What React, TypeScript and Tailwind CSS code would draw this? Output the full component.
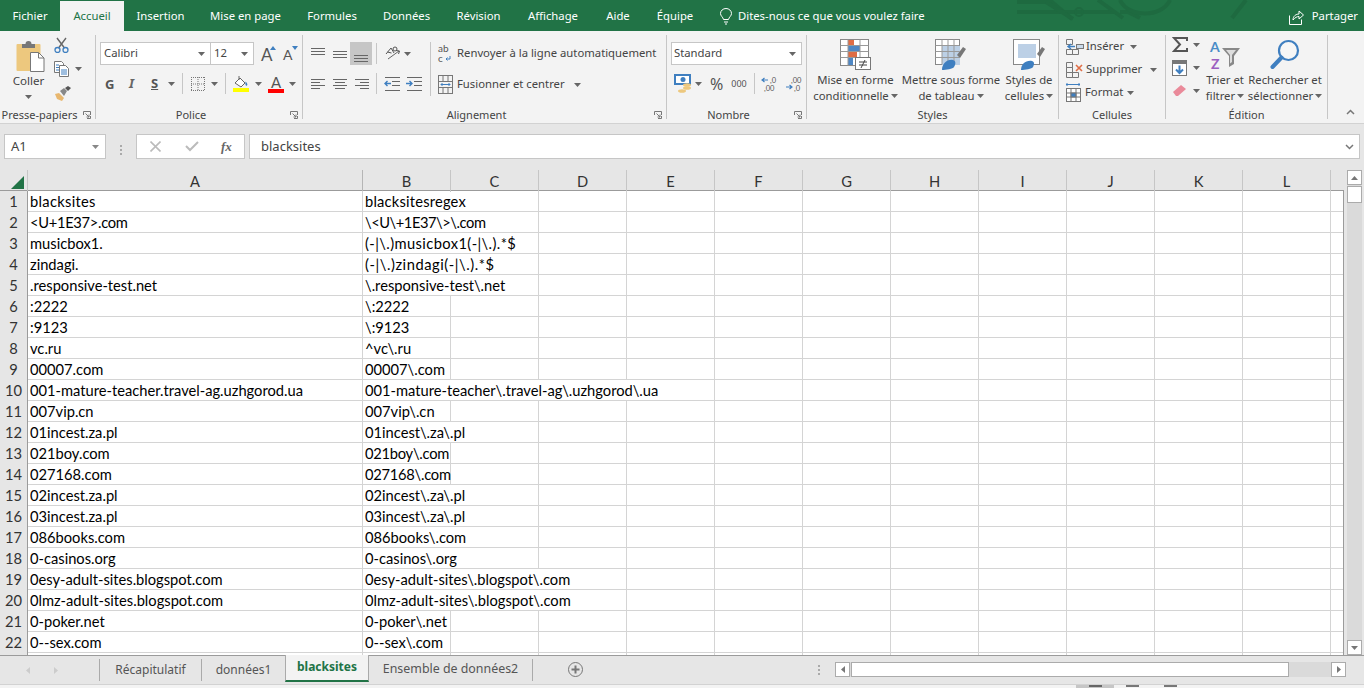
import React from "react";

const UI = "font-['Noto_Sans','Open_Sans',sans-serif]";
const CELL = "font-['Lato','Liberation_Sans',sans-serif]";

const Caret = ({ c = "#666" }: { c?: string }) => (
  <svg width="7" height="4" viewBox="0 0 7 4" className="shrink-0"><path d="M0 0h7L3.5 4z" fill={c} /></svg>
);
const Launcher = () => (
  <svg width="8" height="8" viewBox="0 0 8 8" className="shrink-0" fill="none" stroke="#777">
    <path d="M.5 4V.5H7.500V4M4 7.500h3.500V5" /><path d="M2.500 2.500l3.500 3.500M6 3.500v2.500H3.500" />
  </svg>
);
const Sep = ({ h = "h-[21px]" }: { h?: string }) => <div className={`w-px bg-[#c6c6c6] shrink-0 ${h}`} />;

const Group = ({ w, label, launcher, children }: { w: string; label: string; launcher?: boolean; children: React.ReactNode }) => (
  <div className={`${w} h-[84px] shrink-0 border-r border-[#c6c6c6] flex flex-col`}>
    <div className="h-[73px] shrink-0">{children}</div>
    <div className={`h-[14px] relative flex items-center justify-center text-[11px] leading-[14px] text-[#444] whitespace-nowrap ${launcher ? "pr-[16px]" : ""}`}>
      <span>{label}</span>
      {launcher && <span className="absolute right-[4px] top-[3px]"><Launcher /></span>}
    </div>
  </div>
);

const AlignIcon = ({ lines }: { lines: [number, number, number][] }) => (
  <svg width="16" height="16" viewBox="0 0 16 16" stroke="#666" fill="none">
    {lines.map(([x1, x2, y], i) => <path key={i} d={`M${x1} ${y}.5H${x2}`} />)}
  </svg>
);

const PasteIcon = () => (
  <svg width="29" height="31" viewBox="0 0 29 31">
    <rect x="0.500" y="3" width="24" height="27" rx="1" fill="#edc87e" />
    <path d="M6 7V3h3.500a3 3 0 0 1 6 0H19v4z" fill="#777" />
    <path d="M14.500 11.500h8l5.500 5.500v13.500H14.500z" fill="#fff" stroke="#777" />
    <path d="M22.500 11.500V17H28" fill="none" stroke="#777" />
  </svg>
);
const Scissors = () => (
  <svg width="15" height="16" viewBox="0 0 15 16" fill="none">
    <path d="M3 1l7.500 10M12 1L4.500 11" stroke="#666" strokeWidth="1.400" />
    <circle cx="3.500" cy="13" r="2.500" stroke="#3f7fc0" strokeWidth="1.300" />
    <circle cx="11.500" cy="13" r="2.500" stroke="#3f7fc0" strokeWidth="1.300" />
  </svg>
);
const CopyIcon = () => (
  <svg width="16" height="16" viewBox="0 0 16 16" fill="#fff" stroke="#777">
    <path d="M.5.500h7l2 2v9h-9z" />
    <path d="M5.500 4.500h6l3 3v8h-9z" />
    <path d="M2 4h3M2 6.500h3M2 9h3M7 9h6M7 11h6M7 13h6" stroke="#3f7fc0" />
  </svg>
);
const Painter = () => (
  <svg width="18" height="15" viewBox="0 0 18 15">
    <path d="M1 8l4-1 5 5-2 3-5-2z" fill="#e8b76f" />
    <path d="M6 5l4-3 3 3-3 5z" fill="#888" />
    <path d="M11 2l3-2 3 2-3 3z" fill="#555" />
  </svg>
);
const BigA = ({ size, dir }: { size: number; dir: "up" | "down" }) => (
  <span className="relative flex items-end w-[15px] h-[18px] text-[#555]">
    <span className={`${size === 17 ? "text-[17px]" : "text-[14px]"} leading-[16px] ${CELL}`}>A</span>
    <svg width="6" height="4" viewBox="0 0 6 4" className="absolute right-0 top-[1px]">
      <path d={dir === "up" ? "M0 4h6L3 0z" : "M0 0h6L3 4z"} fill="#3f7fc0" />
    </svg>
  </span>
);
const Borders = () => (
  <svg width="14" height="14" viewBox="0 0 14 14" fill="none" stroke="#777" strokeDasharray="1 1">
    <path d="M.5 0v14M7 0v14M13.500 0v14M0 .5h14M0 7h14M0 13.500h14" />
  </svg>
);
const FillColor = () => (
  <svg width="17" height="17" viewBox="0 0 17 17">
    <path d="M2 8l5-5 5 5-4 4z" fill="#fff" stroke="#666" />
    <path d="M6 1v4" stroke="#666" />
    <path d="M12.500 6.500c1.500 1.500 2.500 3 1.500 4s-2-.5-1.500-4z" fill="#3f7fc0" />
    <rect x="0" y="13" width="16" height="4" fill="#ffff00" />
  </svg>
);
const Orientation = () => (
  <svg width="17" height="17" viewBox="0 0 17 17" fill="none" stroke="#555">
    <path d="M2 9l5-6 3 5M3.500 7l4 1" />
    <circle cx="11" cy="4" r="2" />
    <path d="M4 14L15 6" stroke="#666" /><path d="M12 5.500l3.500.5-1 3" />
  </svg>
);
const Indent = ({ flip }: { flip?: boolean }) => (
  <svg width="16" height="14" viewBox="0 0 16 14" fill="none">
    <path d="M1 .5h15M8 4.500h8M8 8.500h8M1 13.500h15" stroke="#666" />
    <path d={flip ? "M0 6.500h6M3.500 4l2.500 2.500L3.500 9" : "M7 6.500H1M3.500 4L1 6.500 3.500 9"} stroke="#3f7fc0" strokeWidth="1.400" />
  </svg>
);
const WrapIcon = () => (
  <svg width="14" height="20" viewBox="0 0 14 20" overflow="visible">
    <text x="0" y="8" fontSize="10" fill="#555" fontFamily="Lato">ab</text>
    <text x="0" y="18" fontSize="10" fill="#555" fontFamily="Lato">c</text>
    <path d="M12 12v3H8M9.500 13.500L8 15l1.500 1.500" fill="none" stroke="#3f7fc0" />
  </svg>
);
const MergeIcon = () => (
  <svg width="15" height="19" viewBox="0 0 15 19" fill="none" stroke="#777">
    <rect x=".5" y=".5" width="14" height="18" />
    <path d="M.5 6.500h14M.5 12.500h14M5 .5v6M10 .5v6M5 12.500v6M10 12.500v6" />
    <path d="M3 9.500h9M4.500 8L3 9.500 4.500 11M10.500 8L12 9.500 10.500 11" stroke="#3f7fc0" />
  </svg>
);
const Currency = () => (
  <svg width="18" height="20" viewBox="0 0 18 20">
    <rect x="0" y="0" width="17" height="11" fill="#3f7fc0" />
    <rect x="2" y="2" width="13" height="7" fill="#fff" />
    <circle cx="9" cy="5.500" r="2.500" fill="#3f7fc0" />
    <ellipse cx="13" cy="11" rx="4" ry="1.800" fill="#edc87e" />
    <ellipse cx="13" cy="14" rx="4" ry="1.800" fill="#edc87e" />
    <ellipse cx="8" cy="17" rx="4" ry="1.800" fill="#edc87e" />
  </svg>
);
const Decimal = ({ more }: { more?: boolean }) => (
  <svg width="16" height="16" viewBox="0 0 16 16" overflow="visible">
    <text x={more ? 5 : 8} y="7" fontSize="7.500" fill="#555" fontFamily="Lato">{more ? ",00" : ",0"}</text>
    <text x={more ? 8 : 2} y="15" fontSize="7.500" fill="#555" fontFamily="Lato">{more ? ",0" : ",00"}</text>
    <path d={more ? "M0 11h6M3.500 9L6 11l-2.500 2" : "M6 4H0M2.500 2L0 4l2.500 2"} fill="none" stroke="#3f7fc0" strokeWidth="1.200" />
  </svg>
);
const CondFormat = () => (
  <svg width="32" height="32" viewBox="0 0 32 32">
    <rect x=".5" y=".5" width="28" height="26" fill="#fff" stroke="#888" />
    <rect x="8" y="1" width="6" height="5" fill="#df6d45" />
    <rect x="8" y="7" width="12" height="5" fill="#4e87c4" />
    <rect x="8" y="13" width="9" height="5" fill="#df6d45" />
    <rect x="8" y="19" width="5" height="7" fill="#4e87c4" />
    <path d="M8 .5v26M20 .5v26M.5 6.500h28M.5 12.500h28M.5 18.500h28" stroke="#999" fill="none" />
    <rect x="15.500" y="18.500" width="15" height="12" fill="#fff" stroke="#777" />
    <path d="M19 23h8M19 26h8M25 21l-4 8" stroke="#444" fill="none" />
  </svg>
);
const TableStyle = () => (
  <svg width="32" height="32" viewBox="0 0 32 32">
    <rect x=".5" y=".5" width="24" height="25" fill="#fff" stroke="#888" />
    <rect x="7" y="7" width="18" height="19" fill="#bcd0e6" />
    <path d="M7 .5v25M13 .5v25M19 .5v25M.5 6.500h24M.5 12.500h24M.5 18.500h24" stroke="#999" fill="none" />
    <path d="M22 16l6-8 3 2-6 9z" fill="#777" />
    <path d="M7 31c0-6 5-11 11-10 3 1 3 4 1 7-1 2-8 3-12 3z" fill="#3f7fc0" />
  </svg>
);
const CellStyle = () => (
  <svg width="32" height="32" viewBox="0 0 32 32">
    <rect x=".5" y=".5" width="26" height="25" fill="#fff" stroke="#888" />
    <rect x="5" y="5" width="18" height="14" fill="#bcd0e6" />
    <path d="M24 15l5-7 3 2-5 8z" fill="#777" />
    <path d="M8 31c0-6 5-10 11-9 3 1 2 4 1 6-1 2-8 3-12 3z" fill="#3f7fc0" />
  </svg>
);
const InsertIcon = () => (
  <svg width="18" height="16" viewBox="0 0 18 16" fill="none" stroke="#777">
    <path d="M.5.5h6v5h-6zM.5 10.500h6v5h-6zM6.500 10.500h6v5h-6zM6.500 0v0" />
    <rect x="10.500" y="5.500" width="7" height="4" fill="#c9d9ea" stroke="#777" />
    <path d="M9 7.500H2M5 5L2 7.500 5 10" stroke="#3f7fc0" strokeWidth="1.400" />
  </svg>
);
const DeleteIcon = () => (
  <svg width="18" height="16" viewBox="0 0 18 16" fill="none" stroke="#777">
    <path d="M.5.5h6v5h-6zM.5 10.500h6v5h-6zM6.500 10.500h6v5h-6zM.5 5.500h6v5h-6z" />
    <path d="M10 3l6 6M16 3l-6 6" stroke="#df6d45" strokeWidth="1.600" />
  </svg>
);
const FormatIcon = () => (
  <svg width="15" height="19" viewBox="0 0 15 19" fill="none" stroke="#777">
    <path d="M0 1.500h14M1 0v3M13 0v3" stroke="#3f7fc0" />
    <rect x=".5" y="5.500" width="14" height="13" fill="#fff" />
    <path d="M5 5.500v13M10 5.500v13M.5 10h14M.5 14h14" />
    <rect x="5" y="10" width="5" height="4" fill="#3f7fc0" />
  </svg>
);
const Sigma = () => (
  <svg width="16" height="15" viewBox="0 0 16 15" fill="none" stroke="#555" strokeWidth="2">
    <path d="M15 4V1H2l6 6.500L2 14h13v-3" />
  </svg>
);
const FillDown = () => (
  <svg width="15" height="16" viewBox="0 0 15 16">
    <rect x=".5" y=".5" width="14" height="15" fill="#fff" stroke="#777" />
    <rect x="0" y="0" width="15" height="4" fill="#777" />
    <path d="M7.500 5.500v7M4 9.500l3.500 3.500L11 9.500" fill="none" stroke="#3f7fc0" strokeWidth="2" />
  </svg>
);
const Eraser = () => (
  <svg width="15" height="13" viewBox="0 0 15 13"><path d="M1 8l8-7 5 4-8 7H4z" fill="#ea8a9a" /></svg>
);
const SortFilter = () => (
  <svg width="32" height="32" viewBox="0 0 32 32" overflow="visible">
    <text x="1" y="13" fontSize="14" fontWeight="700" fill="#4a8cc7" fontFamily="Lato">A</text>
    <text x="2" y="30" fontSize="14" fontWeight="700" fill="#9b5fc0" fontFamily="Lato">Z</text>
    <path d="M13 9h18l-6 8v8l-5 3V17z" fill="#888" />
    <path d="M17 11h10l-4 5v7l-2 1.500V16z" fill="#ddd" />
  </svg>
);
const Search = () => (
  <svg width="30" height="32" viewBox="0 0 30 32" fill="none">
    <circle cx="18.500" cy="11.500" r="9.500" stroke="#3f7fc0" strokeWidth="2.200" fill="#fff" fillOpacity=".3" />
    <path d="M11.500 18.500L2.500 28" stroke="#3f7fc0" strokeWidth="4" strokeLinecap="round" />
  </svg>
);

const tabs: [string, string][] = [
  ["Fichier", "w-[60px]"], ["Accueil", "w-[64px]"], ["Insertion", "w-[73px]"], ["Mise en page", "w-[97px]"],
  ["Formules", "w-[76px]"], ["Données", "w-[73px]"], ["Révision", "w-[71px]"], ["Affichage", "w-[78px]"],
  ["Aide", "w-[52px]"], ["Équipe", "w-[62px]"],
];

const TitleBar = () => (
  <div className="h-[31px] bg-[#217346] relative flex items-end shrink-0 text-white text-[11.300px]">
    <svg width="1364" height="31" className="absolute inset-0" fill="none" stroke="#1e6a40" strokeWidth="4">
      <path d="M1017 2h17l18 0 20 17" /><path d="M1017 12h98" /><path d="M1046 2l27 17M1120 12h8l12 6" />
      <circle cx="1079" cy="12" r="4" strokeWidth="2" />
      <path d="M1098 0l25 18M1120 0c8 18 42 18 50 0M1246 0l-14 18" />
    </svg>
    {tabs.map(([t, w]) => (
      <div key={t} className={`${w} relative flex items-center justify-center ${t === "Accueil" ? "bg-[#f3f3f3] text-[#217346] h-[30px] pb-[0px]" : "h-[28px] pb-[1px]"}`}>{t}</div>
    ))}
    <div className="relative h-[28px] pb-[1px] flex items-center pl-[14px] gap-[6px]">
      <svg width="12" height="17" viewBox="0 0 12 17" fill="none" stroke="#fff">
        <path d="M3.500 11.500C3 9 .5 8 .5 5.500a5.500 5 0 0 1 11 0C11.500 8 9 9 8.500 11.500zM4 14h4M5 16h2" />
      </svg>
      <span>Dites-nous ce que vous voulez faire</span>
    </div>
    <div className="relative h-[28px] pb-[1px] flex items-center gap-[8px] ml-auto pr-[6px]">
      <svg width="15" height="16" viewBox="0 0 15 16" fill="none" stroke="#fff">
        <path d="M.5 6.500v9h12v-5M4 11c0-4 3-6 6-6V2l4.500 4L10 10V7.500C8 7.500 6 8.500 4 11z" />
      </svg>
      <span>Partager</span>
    </div>
  </div>
);

const Ribbon = () => (
  <div className="h-[93px] shrink-0 bg-[#f3f3f3] border-b border-[#d2d2d2] flex pt-[4px] text-[#444] text-[11.300px]">
    <Group w="w-[96px]" label="Presse-papiers" launcher>
      <div className="flex">
        <div className="w-[54px] pl-[3px] flex flex-col items-center pt-[6px]">
          <div className="pl-[4px]"><PasteIcon /></div>
          <span className="mt-[1px] leading-[16px] text-[11.600px]">Coller</span>
          <span className="mt-[6px]"><Caret /></span>
        </div>
        <div className="flex flex-col pt-[2px] gap-[8px]">
          <Scissors />
          <div className="flex items-center gap-[5px]"><CopyIcon /><Caret /></div>
          <div className="mt-[1px]"><Painter /></div>
        </div>
      </div>
    </Group>
    <Group w="w-[207px]" label="Police" launcher>
      <div className="pl-[4px] pt-[7px]">
        <div className="flex items-center h-[23px]">
          <div className="w-[111px] h-[23px] bg-white border border-[#c6c6c6] flex items-center justify-between pl-[3px] pr-[5px]"><span>Calibri</span><Caret /></div>
          <div className="w-[43px] h-[23px] bg-white border border-[#c6c6c6] border-l-0 flex items-center justify-between pl-[3px] pr-[5px]"><span>12</span><Caret /></div>
          <div className="ml-[7px]"><BigA size={17} dir="up" /></div>
          <div className="ml-[7px]"><BigA size={14} dir="down" /></div>
        </div>
        <div className="flex items-center h-[21px] mt-[8px]">
          <span className="w-[10px] ml-[5px] font-bold text-[#555] text-[13px] leading-[16px]">G</span>
          <span className="w-[8px] ml-[14px] italic font-bold text-[#666] text-[13px]">I</span>
          <span className="w-[10px] ml-[14px] font-bold text-[#555] text-[13px] underline">S</span>
          <span className="ml-[7px]"><Caret /></span>
          <span className="ml-[7px]"><Sep /></span>
          <span className="ml-[8px]"><Borders /></span>
          <span className="ml-[6px]"><Caret /></span>
          <span className="ml-[7px]"><Sep /></span>
          <span className="ml-[7px]"><FillColor /></span>
          <span className="ml-[5px]"><Caret /></span>
          <span className="ml-[6px] flex flex-col items-center w-[16px] text-[15px] leading-[14px] text-[#555]"><span className={CELL}>A</span><span className="w-[16px] h-[4px] bg-[#ff0000]" /></span>
          <span className="ml-[5px]"><Caret /></span>
        </div>
      </div>
    </Group>
    <Group w="w-[364px]" label="Alignement" launcher>
      <div className="flex pt-[7px]">
        <div className="w-[127px] pl-[7px]">
          <div className="flex items-center h-[23px]">
            <AlignIcon lines={[[1, 15, 2], [1, 15, 5], [1, 15, 8]]} />
            <span className="ml-[6px]"><AlignIcon lines={[[1, 15, 5], [1, 15, 8], [1, 15, 11]]} /></span>
            <span className="ml-[2px] w-[22px] h-[23px] bg-[#c6c6c6] flex items-center justify-center"><AlignIcon lines={[[1, 15, 9], [1, 15, 12], [1, 15, 15]]} /></span>
            <span className="ml-[4px]"><Sep /></span>
            <span className="ml-[7px]"><Orientation /></span>
            <span className="ml-[3px]"><Caret /></span>
          </div>
          <div className="flex items-center h-[21px] mt-[8px]">
            <AlignIcon lines={[[1, 15, 3], [1, 10, 6], [1, 15, 9], [1, 10, 12]]} />
            <span className="ml-[6px]"><AlignIcon lines={[[1, 15, 3], [3, 13, 6], [1, 15, 9], [3, 13, 12]]} /></span>
            <span className="ml-[6px]"><AlignIcon lines={[[1, 15, 3], [6, 15, 6], [1, 15, 9], [6, 15, 12]]} /></span>
            <span className="ml-[6px]"><Sep /></span>
            <span className="ml-[7px]"><Indent /></span>
            <span className="ml-[6px]"><Indent flip /></span>
          </div>
        </div>
        <Sep h="h-[54px]" />
        <div className="pl-[7px]">
          <div className="flex items-center h-[23px] gap-[5px]"><WrapIcon /><span className="whitespace-nowrap">Renvoyer à la ligne automatiquement</span></div>
          <div className="flex items-center h-[21px] mt-[9px] gap-[4px]"><MergeIcon /><span className="whitespace-nowrap w-[113px]">Fusionner et centrer</span><Caret /></div>
        </div>
      </div>
    </Group>
    <Group w="w-[140px]" label="Nombre" launcher>
      <div className="pl-[4px] pt-[7px]">
        <div className="w-[131px] h-[23px] bg-white border border-[#c6c6c6] flex items-center justify-between pl-[2px] pr-[5px]"><span>Standard</span><Caret /></div>
        <div className="flex items-center h-[21px] mt-[8px]">
          <span className="ml-[3px]"><Currency /></span>
          <span className="ml-[3px]"><Caret /></span>
          <span className="ml-[8px] text-[16px] leading-[16px] text-[#555]">%</span>
          <span className="ml-[8px] text-[9px] text-[#555]">000</span>
          <span className="ml-[7px]"><Sep /></span>
          <span className="ml-[7px]"><Decimal /></span>
          <span className="ml-[8px]"><Decimal more /></span>
        </div>
      </div>
    </Group>
    <Group w="w-[252px]" label="Styles">
      <div className="flex text-center leading-[16px] pl-[2px] h-full">
        {[
          { w: "w-[93px]", icon: <CondFormat />, l1: "Mise en forme", l2: "conditionnelle" },
          { w: "w-[98px]", icon: <TableStyle />, l1: "Mettre sous forme", l2: "de tableau" },
          { w: "w-[58px]", icon: <CellStyle />, l1: "Styles de", l2: "cellules" },
        ].map((b) => (
          <div key={b.l1} className={`${b.w} flex flex-col items-center pt-[4px]`}>
            <div className="h-[33px]">{b.icon}</div>
            <span className="whitespace-nowrap">{b.l1}</span>
            <span className="whitespace-nowrap flex items-center gap-[2px]">{b.l2}<Caret /></span>
          </div>
        ))}
      </div>
    </Group>
    <Group w="w-[107px]" label="Cellules">
      <div className="flex flex-col pl-[7px] pt-[2px] gap-[4px]">
        <div className="flex items-center h-[19px] gap-[2px]"><InsertIcon /><span className="w-[42px]">Insérer</span><Caret /></div>
        <div className="flex items-center h-[19px] gap-[2px]"><DeleteIcon /><span className="w-[62px]">Supprimer</span><Caret /></div>
        <div className="flex items-center h-[19px] gap-[4px]"><FormatIcon /><span>Format</span><Caret /></div>
      </div>
    </Group>
    <Group w="w-[162px]" label="Édition">
      <div className="flex h-full">
        <div className="flex flex-col pl-[6px] pt-[1px] w-[36px] gap-[6px]">
          <div className="flex items-center gap-[5px] h-[17px]"><Sigma /><Caret /></div>
          <div className="flex items-center gap-[6px] h-[17px]"><FillDown /><Caret /></div>
          <div className="flex items-center gap-[6px] h-[17px]"><Eraser /><Caret /></div>
        </div>
        <div className="w-[46px] flex flex-col items-center pt-[4px] leading-[16px]">
          <div className="h-[33px]"><SortFilter /></div>
          <span className="whitespace-nowrap">Trier et</span>
          <span className="whitespace-nowrap flex items-center gap-[2px]">filtrer<Caret /></span>
        </div>
        <div className="w-[74px] flex flex-col items-center pt-[4px] leading-[16px]">
          <div className="h-[33px]"><Search /></div>
          <span className="whitespace-nowrap">Rechercher et</span>
          <span className="whitespace-nowrap flex items-center gap-[2px]">sélectionner<Caret /></span>
        </div>
      </div>
    </Group>
    <div className="flex-1 flex items-end justify-end pr-[9px] pb-[8px]">
      <svg width="9" height="6" viewBox="0 0 9 6" fill="none" stroke="#777" strokeWidth="1.500"><path d="M1 5l3.500-3.500L8 5" /></svg>
    </div>
  </div>
);

const FormulaBar = () => (
  <div className="h-[41px] shrink-0 bg-[#e6e6e6] flex pt-[10px] pl-[4px] pr-[4px] text-[#444]">
    <div className="w-[102px] h-[25px] bg-white border border-[#c6c6c6] flex items-center justify-between pl-[6px] pr-[6px] text-[13px]">
      <span className="pt-[1px]">A1</span><Caret c="#888" />
    </div>
    <div className="w-[30px] flex flex-col items-center justify-center gap-[2px]">
      <span className="w-[2px] h-[2px] bg-[#aaa]" /><span className="w-[2px] h-[2px] bg-[#aaa]" /><span className="w-[2px] h-[2px] bg-[#aaa]" />
    </div>
    <div className="w-[109px] h-[25px] bg-white border border-[#c6c6c6] flex items-center">
      <svg width="11" height="11" viewBox="0 0 11 11" className="ml-[13px]" stroke="#bbb" strokeWidth="1.600"><path d="M.5.500l10 10M10.500.500l-10 10" /></svg>
      <svg width="14" height="11" viewBox="0 0 14 11" className="ml-[24px]" fill="none" stroke="#bbb" strokeWidth="2"><path d="M1 5l4 4 8-8" /></svg>
      <span className="ml-[22px] text-[13px] italic font-bold font-['Liberation_Serif',serif] text-[#666]">fx</span>
    </div>
    <div className="ml-[4px] flex-1 h-[25px] bg-white border border-[#c6c6c6] flex items-center justify-between pl-[11px] pr-[5px] text-[13px]">
      <span className="pt-[1px]">blacksites</span>
      <svg width="9" height="6" viewBox="0 0 9 6" fill="none" stroke="#777" strokeWidth="1.500"><path d="M1 1l3.500 3.500L8 1" /></svg>
    </div>
  </div>
);

const rows: [string, string, number, string, string][] = [
  ["blacksites", "blacksitesregex", 1, "tracking-[0.3px]", "tracking-[0.2px]"],
  ["<U+1E37>.com", "\\<U\\+1E37\\>\\.com", 1, "tracking-[-0.3px]", "tracking-[-0.45px]"],
  ["musicbox1.", "(-|\\.)musicbox1(-|\\.).*$", 1, "", "tracking-[0.4px]"],
  ["zindagi.", "(-|\\.)zindagi(-|\\.).*$", 1, "", "tracking-[0.55px]"],
  [".responsive-test.net", "\\.responsive-test\\.net", 1, "", ""],
  [":2222", "\\:2222", 0, "", ""],
  [":9123", "\\:9123", 0, "", ""],
  ["vc.ru", "^vc\\.ru", 0, "", ""],
  ["00007.com", "00007\\.com", 0, "", ""],
  ["001-mature-teacher.travel-ag.uzhgorod.ua", "001-mature-teacher\\.travel-ag\\.uzhgorod\\.ua", 3, "", ""],
  ["007vip.cn", "007vip\\.cn", 0, "", ""],
  ["01incest.za.pl", "01incest\\.za\\.pl", 1, "", ""],
  ["021boy.com", "021boy\\.com", 0, "", "tracking-[-0.25px]"],
  ["027168.com", "027168\\.com", 0, "", "tracking-[-0.25px]"],
  ["02incest.za.pl", "02incest\\.za\\.pl", 1, "", ""],
  ["03incest.za.pl", "03incest\\.za\\.pl", 1, "", ""],
  ["086books.com", "086books\\.com", 1, "", ""],
  ["0-casinos.org", "0-casinos\\.org", 1, "", ""],
  ["0esy-adult-sites.blogspot.com", "0esy-adult-sites\\.blogspot\\.com", 2, "", ""],
  ["0lmz-adult-sites.blogspot.com", "0lmz-adult-sites\\.blogspot\\.com", 2, "", ""],
  ["0-poker.net", "0-poker\\.net", 0, "", ""],
  ["0--sex.com", "0--sex\\.com", 0, "", ""],
];
const cols = ["C", "D", "E", "F", "G", "H", "I", "J", "K", "L"];
const gridCols = "grid grid-cols-[28px_335px_repeat(11,88px)_1fr]";

const Row = ({ n, a, b, span, ta, tb }: { n: number; a: string; b: string; span: number; ta: string; tb: string }) => (
  <div className={`${gridCols} h-[21px] bg-white border-b border-[#d4d4d4] text-black`}>
    <div className="bg-[#e6e6e6] border-r border-[#9b9b9b] text-center text-[#333] leading-[21px]">{n}</div>
    <div className={`border-r border-[#d4d4d4] pl-[2px] whitespace-nowrap leading-[21px] ${ta}`}>{a}</div>
    <div className={`border-r ${span >= 1 ? "border-transparent" : "border-[#d4d4d4]"} pl-[2px] whitespace-nowrap leading-[21px] ${tb}`}>{b}</div>
    {cols.map((c, i) => (
      <div key={c} className={`border-r ${i + 1 < span ? "border-transparent" : "border-[#d4d4d4]"}`} />
    ))}
    <div />
  </div>
);

const Sheet = () => (
  <div className="h-[490px] shrink-0 bg-[#e6e6e6] flex pt-[5px] overflow-hidden">
    <div className={`w-[1344px] shrink-0 text-[14.700px] ${CELL}`}>
      <div className={`${gridCols} h-[21px] border-b border-[#9b9b9b] text-[#333] text-center leading-[22px]`}>
        <div className="border-r border-[#c6c6c6] flex items-end justify-end pr-[3px] pb-[3px]">
          <svg width="13" height="13" viewBox="0 0 13 13"><path d="M13 0v13H0z" fill="#217346" /></svg>
        </div>
        <div className="border-r border-[#b5b5b5]">A</div>
        <div className="border-r border-[#c6c6c6]">B</div>
        {cols.map((c) => <div key={c} className="border-r border-[#c6c6c6]">{c}</div>)}
        <div />
      </div>
      <div className="border-r border-[#9b9b9b]">
        {rows.map(([a, b, s, ta, tb], i) => <Row key={i} n={i + 1} a={a} b={b} span={s} ta={ta} tb={tb} />)}
        <div className={`${gridCols} h-[10px] bg-white`}>
          <div className="bg-[#e6e6e6] border-r border-[#9b9b9b]" />
          <div className="border-r border-[#d4d4d4]" />
          <div className="border-r border-[#d4d4d4]" />
          {cols.map((c) => <div key={c} className="border-r border-[#d4d4d4]" />)}
          <div />
        </div>
      </div>
    </div>
    <div className="ml-[3px] w-[15px] h-[485px] bg-[#dadada] flex flex-col">
      <div className="h-[15px] bg-white border border-[#ababab] flex items-center justify-center">
        <svg width="7" height="4" viewBox="0 0 7 4"><path d="M0 4h7L3.500 0z" fill="#777" /></svg>
      </div>
      <div className="h-[17px] mt-[1px] bg-white border border-[#ababab]" />
      <div className="flex-1" />
      <div className="h-[15px] bg-white border border-[#ababab] flex items-center justify-center"><Caret c="#777" /></div>
    </div>
  </div>
);

const SheetTabs = () => (
  <div className="h-[29px] shrink-0 bg-[#e6e6e6] border-t border-[#9b9b9b] border-b-0 flex items-start text-[#555] text-[12px]">
    <div className="w-[100px] h-[22px] mt-[3px] flex items-center border-r border-[#aaa]">
      <svg width="4" height="7" viewBox="0 0 4 7" className="ml-[26px]"><path d="M4 0v7L0 3.500z" fill="#ccc" /></svg>
      <svg width="4" height="7" viewBox="0 0 4 7" className="ml-[24px]"><path d="M0 0v7l4-3.500z" fill="#ccc" /></svg>
    </div>
    <div className="w-[102px] h-[22px] mt-[3px] pb-[1px] flex items-center justify-center border-r border-[#aaa]">Récapitulatif</div>
    <div className="w-[83px] h-[22px] mt-[3px] pb-[1px] flex items-center justify-center">données1</div>
    <div className="w-[84px] h-[27px] -mt-px pb-[1px] bg-[#f3f3f3] border-x border-[#aaa] border-b-2 border-b-[#217346] flex items-center justify-center font-bold text-[#217346]">blacksites</div>
    <div className="w-[164px] h-[22px] mt-[3px] pb-[1px] flex items-center justify-center border-r border-[#aaa] text-[12.400px]">Ensemble de données2</div>
    <div className="w-[50px] h-[27px] flex items-center justify-end">
      <svg width="15" height="15" viewBox="0 0 15 15" fill="none" stroke="#777"><circle cx="7.500" cy="7.500" r="7" /><path d="M3.500 7.500h8M7.500 3.500v8" strokeWidth="2" /></svg>
    </div>
    <div className="w-[252px] h-[27px] flex flex-col items-end justify-center gap-[2px] pr-[15px]">
      <span className="w-[2px] h-[2px] bg-[#aaa]" /><span className="w-[2px] h-[2px] bg-[#aaa]" /><span className="w-[2px] h-[2px] bg-[#aaa]" />
    </div>
    <div className="w-[511px] h-[15px] mt-[6px] bg-[#dadada] flex">
      <div className="w-[15px] bg-white border border-[#ababab] flex items-center justify-center">
        <svg width="4" height="7" viewBox="0 0 4 7"><path d="M4 0v7L0 3.500z" fill="#777" /></svg>
      </div>
      <div className="w-[438px] ml-[1px] bg-white border border-[#ababab]" />
      <div className="flex-1" />
      <div className="w-[15px] bg-white border border-[#ababab] flex items-center justify-center">
        <svg width="4" height="7" viewBox="0 0 4 7"><path d="M0 0v7l4-3.500z" fill="#777" /></svg>
      </div>
    </div>
  </div>
);

const StatusBar = () => (
  <div className="h-[4px] shrink-0 bg-[#f3f3f3] border-t border-[#d2d2d2] flex overflow-hidden">
    <div className="ml-[1076px] w-[38px] h-full bg-[#c6c6c6] flex justify-center">
      <span className="w-[13px] h-[2px] bg-[#666]" />
    </div>
    <span className="ml-[12px] w-[13px] h-[2px] bg-[#777]" />
    <span className="ml-[25px] w-[13px] h-[2px] bg-[#777]" />
  </div>
);

export default function App() {
  return (
    <div className={`w-[1364px] h-[688px] overflow-hidden flex flex-col bg-[#e6e6e6] ${UI}`}>
      <TitleBar />
      <Ribbon />
      <FormulaBar />
      <Sheet />
      <SheetTabs />
      <StatusBar />
    </div>
  );
}
